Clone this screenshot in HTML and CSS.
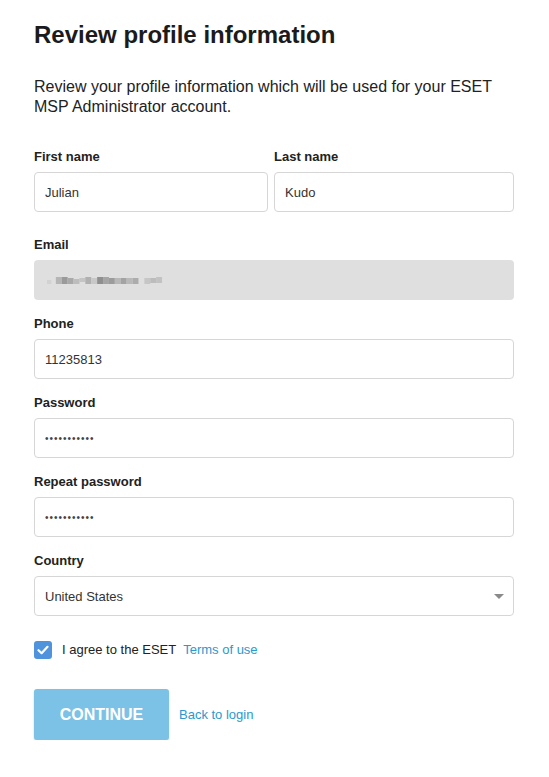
FILE: index.html
```html
<!DOCTYPE html>
<html lang="en">
<head>
  <meta charset="UTF-8">
  <meta name="viewport" content="width=device-width, initial-scale=1.0">
  <title>Review profile information</title>
  <link rel="stylesheet" href="styles.css">
</head>
<body>

  <div class="page">
    <h1>Review profile information</h1>
    <p class="intro">Review your profile information which will be used for your ESET MSP Administrator account.</p>

    <form class="profile-form" onsubmit="return false">
      <div class="row">
        <div class="field">
          <label for="firstName">First name</label>
          <input type="text" id="firstName" value="Julian">
        </div>
        <div class="field">
          <label for="lastName">Last name</label>
          <input type="text" id="lastName" value="Kudo">
        </div>
      </div>

      <div class="field">
        <label>Email</label>
        <div class="readonly">
          <!-- pixelated email address -->
          <svg class="pixels" width="118" height="12" viewBox="0 0 80 12" preserveAspectRatio="none">
            <rect x="0" y="5" width="3" height="4" fill="#d2d2d2"/>
            <rect x="6" y="2" width="4" height="7" fill="#b5b5b5"/>
            <rect x="10" y="2" width="4" height="7" fill="#9a9a9a"/>
            <rect x="14" y="3" width="4" height="6" fill="#a9a9a9"/>
            <rect x="18" y="4" width="4" height="5" fill="#bdbdbd"/>
            <rect x="22" y="3" width="4" height="4" fill="#c4c4c4"/>
            <rect x="26" y="2" width="4" height="7" fill="#b0b0b0"/>
            <rect x="30" y="3" width="4" height="6" fill="#c8c8c8"/>
            <rect x="34" y="2" width="4" height="7" fill="#8f8f8f"/>
            <rect x="38" y="2" width="4" height="7" fill="#a5a5a5"/>
            <rect x="42" y="3" width="4" height="6" fill="#9c9c9c"/>
            <rect x="46" y="3" width="4" height="6" fill="#b8b8b8"/>
            <rect x="50" y="3" width="4" height="6" fill="#a3a3a3"/>
            <rect x="54" y="3" width="4" height="6" fill="#b9b9b9"/>
            <rect x="58" y="3" width="4" height="6" fill="#acacac"/>
            <rect x="66" y="3" width="4" height="6" fill="#c6c6c6"/>
            <rect x="70" y="3" width="4" height="5" fill="#bcbcbc"/>
            <rect x="74" y="2" width="4" height="6" fill="#c2c2c2"/>
          </svg>
        </div>
      </div>

      <div class="field">
        <label for="phone">Phone</label>
        <input type="text" id="phone" value="11235813">
      </div>

      <div class="field">
        <label for="password">Password</label>
        <input type="password" class="secret" id="password" value="abcdefghijk">
      </div>

      <div class="field">
        <label for="password2">Repeat password</label>
        <input type="password" class="secret" id="password2" value="abcdefghijk">
      </div>

      <div class="field">
        <label for="country">Country</label>
        <div class="select-wrap">
          <select id="country">
            <option selected>United States</option>
            <option>Canada</option>
            <option>United Kingdom</option>
          </select>
        </div>
      </div>

      <label class="agree">
        <span class="box">
          <svg width="12" height="10" viewBox="0 0 12 10"><path d="M1.5 5.2 L4.6 8.2 L10.5 1.8" fill="none" stroke="#fff" stroke-width="2.2" stroke-linecap="round" stroke-linejoin="round"/></svg>
        </span>
        I agree to the ESET <a href="#">Terms of use</a>
      </label>

      <div class="actions">
        <button type="submit">CONTINUE</button>
        <a href="#">Back to login</a>
      </div>
    </form>
  </div>

</body>
</html>
```

FILE: styles.css
```css
body {
  font-family: "Liberation Sans", Arial, sans-serif;
  background-color: #fff;
  color: #222;
  margin: 0;
  padding: 0;
}
.page {
  width: 480px;
  padding: 21px 0 0 34px;
}
h1 {
  margin: 0;
  font-size: 24px;
  line-height: 28px;
  font-weight: bold;
  color: #1b1b1b;
}
.intro {
  margin: 28px 0 0;
  font-size: 16px;
  line-height: 20px;
  color: #222;
}
.profile-form {
  margin-top: 32px;
}
.row {
  display: grid;
  grid-template-columns: 234px 1fr;
  gap: 6px;
  margin-bottom: 25px;
}
.row .field {
  margin-bottom: 0;
}
.field {
  margin-bottom: 16px;
}
.field label {
  display: block;
  font-size: 13px;
  line-height: 16px;
  font-weight: bold;
  color: #222;
  margin-bottom: 7px;
}
input, select {
  display: block;
  width: 100%;
  height: 40px;
  box-sizing: border-box;
  border: 1px solid #d6d6d6;
  border-radius: 4px;
  padding: 0 10px;
  font-family: "Liberation Sans", Arial, sans-serif;
  font-size: 13px;
  color: #333;
  background: #fff;
  outline: none;
}
input.secret {
  font-size: 10px;
  letter-spacing: 1px;
  color: #444;
}
.readonly {
  height: 40px;
  box-sizing: border-box;
  border-radius: 4px;
  background: #dfdfdf;
  padding: 0 13px;
  display: flex;
  align-items: center;
}
.pixels {
  display: block;
  margin-top: 2px;
}
/* country dropdown */
.select-wrap {
  position: relative;
}
select {
  -webkit-appearance: none;
  appearance: none;
}
.select-wrap::after {
  content: "";
  position: absolute;
  right: 10px;
  top: 18px;
  border-left: 5px solid transparent;
  border-right: 5px solid transparent;
  border-top: 5px solid #8a8a8a;
}
/* terms checkbox */
.agree {
  display: flex;
  align-items: center;
  margin-top: 25px;
  font-size: 13px;
  line-height: 18px;
  color: #222;
}
.agree .box {
  width: 18px;
  height: 18px;
  box-sizing: border-box;
  border-radius: 3px;
  background: #4f93dc;
  display: flex;
  align-items: center;
  justify-content: center;
  margin-right: 10px;
}
.agree a {
  margin-left: 7px;
}
a {
  color: #2b98cf;
  text-decoration: none;
}
.actions {
  display: flex;
  align-items: center;
  gap: 10px;
  margin-top: 30px;
  font-size: 13px;
}
.actions button {
  width: 135px;
  height: 51px;
  border: none;
  border-radius: 3px;
  background-color: #7cc2e6;
  color: #fff;
  font-family: "Liberation Sans", Arial, sans-serif;
  font-size: 16px;
  font-weight: bold;
  cursor: pointer;
  box-shadow: 0 1px 2px rgba(0, 0, 0, 0.2);
}
```
